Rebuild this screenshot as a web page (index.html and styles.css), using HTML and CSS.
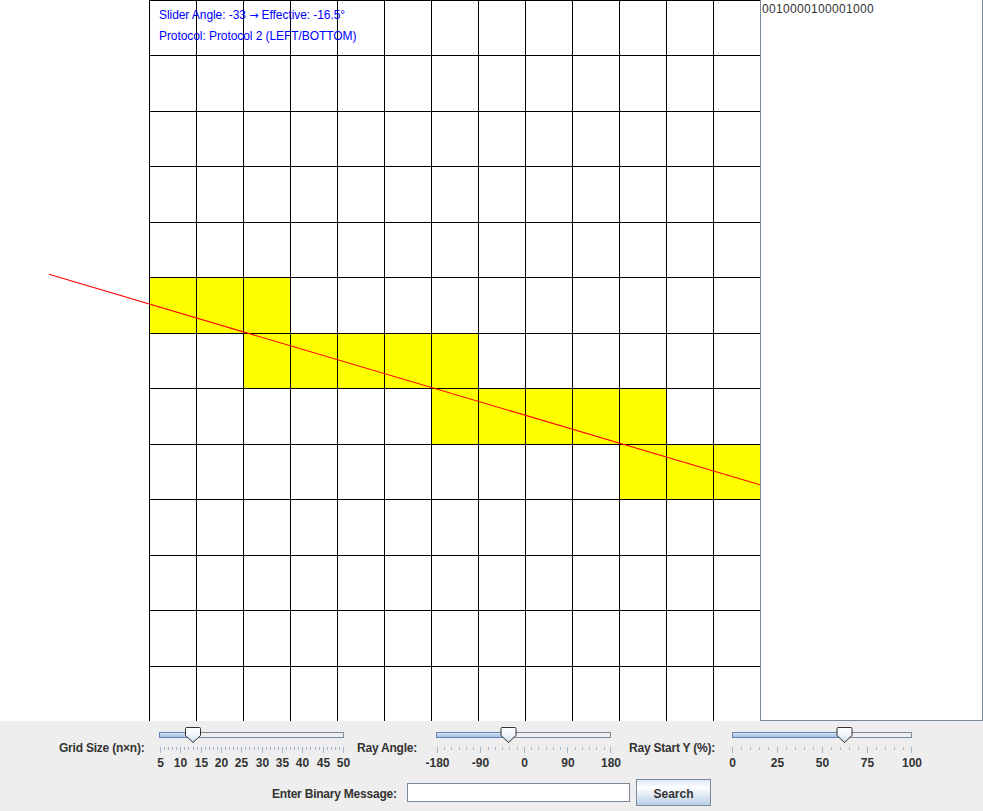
FILE: index.html
```html
<!DOCTYPE html>
<html>
<head>
<meta charset="utf-8">
<link rel="stylesheet" href="styles.css">
</head>
<body>
<svg class="defs" width="0" height="0">
  <defs>
    <linearGradient id="thumbGrad" x1="0" y1="0" x2="0" y2="1">
      <stop offset="0" stop-color="#ffffff"/>
      <stop offset="0.5" stop-color="#f2f6fa"/>
      <stop offset="1" stop-color="#c4d6ea"/>
    </linearGradient>
    <linearGradient id="fillGrad" x1="0" y1="0" x2="0" y2="1">
      <stop offset="0" stop-color="#dde8f3"/>
      <stop offset="0.5" stop-color="#bcd0e6"/>
      <stop offset="1" stop-color="#a6bfdc"/>
    </linearGradient>
  </defs>
</svg>
<div class="app">
  <div class="top">
    <div class="canvas">
      <svg class="grid" width="760" height="721" viewBox="0 0 760 721">
        <g fill="#ffff00">
          <rect x="149" y="277" width="141" height="56"/>
          <rect x="243" y="333" width="235" height="55"/>
          <rect x="431" y="388" width="235" height="56"/>
          <rect x="619" y="444" width="141" height="55"/>
        </g>
        <g stroke="#000" stroke-width="1">
          <line x1="149.5" y1="0" x2="149.5" y2="721"/>
          <line x1="196.5" y1="0" x2="196.5" y2="721"/>
          <line x1="243.5" y1="0" x2="243.5" y2="721"/>
          <line x1="290.5" y1="0" x2="290.5" y2="721"/>
          <line x1="337.5" y1="0" x2="337.5" y2="721"/>
          <line x1="384.5" y1="0" x2="384.5" y2="721"/>
          <line x1="431.5" y1="0" x2="431.5" y2="721"/>
          <line x1="478.5" y1="0" x2="478.5" y2="721"/>
          <line x1="525.5" y1="0" x2="525.5" y2="721"/>
          <line x1="572.5" y1="0" x2="572.5" y2="721"/>
          <line x1="619.5" y1="0" x2="619.5" y2="721"/>
          <line x1="666.5" y1="0" x2="666.5" y2="721"/>
          <line x1="713.5" y1="0" x2="713.5" y2="721"/>
          <line x1="149" y1="0.5" x2="760" y2="0.5"/>
          <line x1="149" y1="55.5" x2="760" y2="55.5"/>
          <line x1="149" y1="111.5" x2="760" y2="111.5"/>
          <line x1="149" y1="166.5" x2="760" y2="166.5"/>
          <line x1="149" y1="222.5" x2="760" y2="222.5"/>
          <line x1="149" y1="277.5" x2="760" y2="277.5"/>
          <line x1="149" y1="333.5" x2="760" y2="333.5"/>
          <line x1="149" y1="388.5" x2="760" y2="388.5"/>
          <line x1="149" y1="444.5" x2="760" y2="444.5"/>
          <line x1="149" y1="499.5" x2="760" y2="499.5"/>
          <line x1="149" y1="555.5" x2="760" y2="555.5"/>
          <line x1="149" y1="610.5" x2="760" y2="610.5"/>
          <line x1="149" y1="666.5" x2="760" y2="666.5"/>
        </g>
        <line x1="49" y1="274.3" x2="760" y2="484.8" stroke="#ff0000" stroke-width="1.1"/>
      </svg>
      <div class="overlay">
        <div>Slider Angle: -33 <span class="arrow">→</span> Effective: -16.5°</div>
        <div>Protocol: Protocol 2 (LEFT/BOTTOM)</div>
      </div>
    </div>
    <div class="textarea">0010000100001000</div>
  </div>
  <div class="controls">
    <div class="row1">
      <div class="label l1">Grid Size (n×n):</div>
      <svg class="slider s1" width="205" height="46" viewBox="149 724 205 46">
        <rect class="track" x="159.5" y="732.5" width="184" height="5"/>
        <rect class="track-fill" x="159.5" y="732.5" width="34" height="5"/>
        <g class="ticks">
          <path class="minor" d="M160.5 747v3M164.5 747v3M168.5 747v3M172.5 747v3M176.5 747v3M184.5 747v3M188.5 747v3M193.5 747v3M197.5 747v3M205.5 747v3M209.5 747v3M213.5 747v3M217.5 747v3M225.5 747v3M229.5 747v3M233.5 747v3M237.5 747v3M245.5 747v3M249.5 747v3M254.5 747v3M258.5 747v3M266.5 747v3M270.5 747v3M274.5 747v3M278.5 747v3M286.5 747v3M290.5 747v3M294.5 747v3M298.5 747v3M306.5 747v3M310.5 747v3M315.5 747v3M319.5 747v3M327.5 747v3M331.5 747v3M335.5 747v3M339.5 747v3"/>
          <path class="major" d="M160.5 747v6M180.5 747v6M201.5 747v6M221.5 747v6M241.5 747v6M262.5 747v6M282.5 747v6M302.5 747v6M323.5 747v6M343.5 747v6"/>
        </g>
        <g class="tl">
          <text x="160.5" y="767">5</text>
          <text x="180.5" y="767">10</text>
          <text x="201.5" y="767">15</text>
          <text x="221.5" y="767">20</text>
          <text x="241.5" y="767">25</text>
          <text x="262.5" y="767">30</text>
          <text x="282.5" y="767">35</text>
          <text x="302.5" y="767">40</text>
          <text x="323.5" y="767">45</text>
          <text x="343.5" y="767">50</text>
        </g>
        <path class="thumb" d="M185.5 728.5Q185.5 727.5 186.5 727.5H199.5Q200.5 727.5 200.5 728.5V735.5L193 742.5L185.5 735.5Z"/>
      </svg>
      <div class="label l2">Ray Angle:</div>
      <svg class="slider s2" width="195" height="46" viewBox="426 724 195 46">
        <rect class="track" x="436.5" y="732.5" width="174" height="5"/>
        <rect class="track-fill" x="436.5" y="732.5" width="72" height="5"/>
        <g class="ticks">
          <path class="minor" d="M444.5 747v3M451.5 747v3M459.5 747v3M466.5 747v3M473.5 747v3M488.5 747v3M495.5 747v3M502.5 747v3M509.5 747v3M517.5 747v3M531.5 747v3M538.5 747v3M546.5 747v3M553.5 747v3M560.5 747v3M575.5 747v3M582.5 747v3M589.5 747v3M596.5 747v3M604.5 747v3"/>
          <path class="major" d="M437.5 747v6M480.5 747v6M524.5 747v6M567.5 747v6M610.5 747v6"/>
        </g>
        <g class="tl">
          <text x="437.5" y="767">-180</text>
          <text x="480.5" y="767">-90</text>
          <text x="524.5" y="767">0</text>
          <text x="568" y="767">90</text>
          <text x="611" y="767">180</text>
        </g>
        <path class="thumb" d="M501 728.5Q501 727.5 502 727.5H515Q516 727.5 516 728.5V735.5L508.5 742.5L501 735.5Z"/>
      </svg>
      <div class="label l3">Ray Start Y (%):</div>
      <svg class="slider s3" width="205" height="46" viewBox="722 724 205 46">
        <rect class="track" x="732.5" y="732.5" width="179" height="5"/>
        <rect class="track-fill" x="732.5" y="732.5" width="112" height="5"/>
        <g class="ticks">
          <path class="minor" d="M741.5 747v3M750.5 747v3M759.5 747v3M768.5 747v3M786.5 747v3M795.5 747v3M804.5 747v3M813.5 747v3M831.5 747v3M840.5 747v3M849.5 747v3M858.5 747v3M876.5 747v3M885.5 747v3M894.5 747v3M903.5 747v3"/>
          <path class="major" d="M732.5 747v6M777.5 747v6M822.5 747v6M867.5 747v6M911.5 747v6"/>
        </g>
        <g class="tl">
          <text x="732.5" y="767">0</text>
          <text x="777.5" y="767">25</text>
          <text x="822.5" y="767">50</text>
          <text x="867.5" y="767">75</text>
          <text x="912" y="767">100</text>
        </g>
        <path class="thumb" d="M837 728.5Q837 727.5 838 727.5H851Q852 727.5 852 728.5V735.5L844.5 742.5L837 735.5Z"/>
      </svg>
    </div>
    <div class="row2">
      <div class="label l4">Enter Binary Message:</div>
      <div class="field"></div>
      <div class="button">Search</div>
    </div>
  </div>
</div>
</body>
</html>
```

FILE: styles.css
```css
html, body {
  margin: 0;
  padding: 0;
}
body {
  width: 983px;
  height: 811px;
  background: #eeeeee;
  overflow: hidden;
  font-family: "Liberation Sans", Arial, sans-serif;
}
.defs {
  position: absolute;
  width: 0;
  height: 0;
}
.app {
  width: 983px;
  height: 811px;
  display: flex;
  flex-direction: column;
}
.top {
  display: flex;
  height: 721px;
}
.canvas {
  position: relative;
  width: 760px;
  height: 721px;
  background: #ffffff;
}
.grid {
  display: block;
}
.overlay {
  position: absolute;
  left: 159px;
  top: 5px;
  color: #0000ff;
  font-size: 12px;
  line-height: 21px;
  white-space: nowrap;
  letter-spacing: -0.07px;
}
.arrow {
  font-family: "DejaVu Sans", sans-serif;
  font-size: 11px;
  letter-spacing: 0;
}
.textarea {
  background: #ffffff;
  border: 1px solid #7a8a99;
  border-top: none;
  padding: 1px 0 0 1px;
  box-sizing: border-box;
  width: 223px;
  height: 721px;
  font-size: 12px;
  line-height: 16px;
  color: #333333;
  letter-spacing: 0.33px;
}
.controls {
  height: 90px;
  display: flex;
  flex-direction: column;
}
.row1 {
  display: flex;
  align-items: flex-start;
  padding-top: 3px;
  padding-left: 59px;
  height: 49px;
}
.label {
  font-weight: bold;
  font-size: 12px;
  line-height: 14px;
  color: #333333;
  white-space: nowrap;
  letter-spacing: -0.22px;
}
.row1 .label {
  margin-top: 17px;
}
.l1 { width: 90px; }
.l2 { width: 69px; margin-left: 3px; }
.l3 { width: 93px; margin-left: 8px; }
.slider {
  display: block;
  flex: none;
}
.track {
  fill: #eeeeee;
  stroke: #7a8a99;
  stroke-width: 1;
}
.track-fill {
  fill: url(#fillGrad);
  stroke: #6382bf;
  stroke-width: 1;
}
.ticks path {
  stroke: #a3b8cc;
  stroke-width: 1;
  fill: none;
}
.tl text {
  font-family: "Liberation Sans", Arial, sans-serif;
  font-weight: bold;
  font-size: 12px;
  fill: #333333;
  text-anchor: middle;
}
.thumb {
  fill: url(#thumbGrad);
  stroke: #333333;
  stroke-width: 1;
}
.row2 {
  display: flex;
  justify-content: center;
  align-items: flex-start;
  height: 38px;
}
.l4 {
  width: 129px;
  margin-top: 14px;
}
.field {
  width: 223px;
  height: 19px;
  margin-top: 10px;
  margin-left: 6px;
  box-sizing: border-box;
  background: #ffffff;
  border: 1px solid #7a8a99;
}
.button {
  width: 75px;
  height: 27px;
  margin-top: 6px;
  margin-left: 6px;
  box-sizing: border-box;
  border: 1px solid #7a8a99;
  background: linear-gradient(#dde8f3 0%, #ffffff 30%, #e6eef6 55%, #b8cfe5 100%);
  font-weight: bold;
  font-size: 12px;
  color: #333333;
  text-align: center;
  padding-top: 2px;
  line-height: 24px;
}
```
